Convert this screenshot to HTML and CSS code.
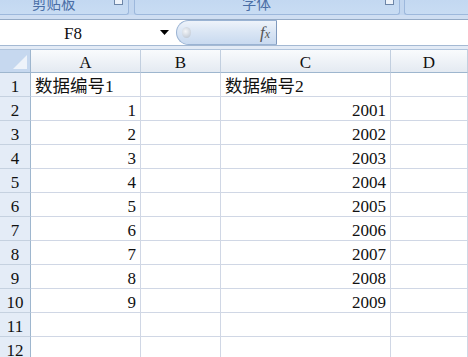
FILE: index.html
```html
<!DOCTYPE html>
<html lang="zh-CN">
<head>
<meta charset="utf-8">
<title>Excel</title>
<link rel="stylesheet" href="styles.css">
</head>
<body>
<div class="app">
  <div class="ribbon">
    <div class="group g1"><span class="glabel l1">剪贴板</span><span class="launcher"></span></div>
    <div class="group g2"><span class="glabel l2">字体</span><span class="launcher"></span></div>
    <div class="group g3"></div>
  </div>
  <div class="sep"></div>
  <div class="fbar">
    <div class="namebox">
      <span class="name">F8</span>
      <svg class="arrow" width="9" height="5" viewBox="0 0 9 5"><path d="M0 0H9L4.5 5Z" fill="#000"/></svg>
    </div>
    <div class="pill">
      <span class="knob"></span>
      <span class="fx">f<span class="fxx">x</span></span>
    </div>
    <div class="finput"></div>
  </div>
  <div class="strip"></div>
  <div class="grid">
    <div class="corner"><span class="tri"></span></div>
    <div class="colh">A</div>
    <div class="colh">B</div>
    <div class="colh">C</div>
    <div class="colh">D</div>

    <div class="rowh">1</div><div class="cell txt">数据编号1</div><div class="cell"></div><div class="cell txt">数据编号2</div><div class="cell"></div>
    <div class="rowh">2</div><div class="cell num">1</div><div class="cell"></div><div class="cell num">2001</div><div class="cell"></div>
    <div class="rowh">3</div><div class="cell num">2</div><div class="cell"></div><div class="cell num">2002</div><div class="cell"></div>
    <div class="rowh">4</div><div class="cell num">3</div><div class="cell"></div><div class="cell num">2003</div><div class="cell"></div>
    <div class="rowh">5</div><div class="cell num">4</div><div class="cell"></div><div class="cell num">2004</div><div class="cell"></div>
    <div class="rowh">6</div><div class="cell num">5</div><div class="cell"></div><div class="cell num">2005</div><div class="cell"></div>
    <div class="rowh">7</div><div class="cell num">6</div><div class="cell"></div><div class="cell num">2006</div><div class="cell"></div>
    <div class="rowh">8</div><div class="cell num">7</div><div class="cell"></div><div class="cell num">2007</div><div class="cell"></div>
    <div class="rowh">9</div><div class="cell num">8</div><div class="cell"></div><div class="cell num">2008</div><div class="cell"></div>
    <div class="rowh">10</div><div class="cell num">9</div><div class="cell"></div><div class="cell num">2009</div><div class="cell"></div>
    <div class="rowh">11</div><div class="cell"></div><div class="cell"></div><div class="cell"></div><div class="cell"></div>
    <div class="rowh">12</div><div class="cell"></div><div class="cell"></div><div class="cell"></div><div class="cell"></div>
  </div>
</div>
</body>
</html>
```
FILE: styles.css
```css
html, body {
  margin: 0;
  padding: 0;
  background: #ffffff;
}
.app {
  width: 468px;
  height: 357px;
  overflow: hidden;
  font-family: "Liberation Serif", "Noto Sans CJK SC", serif;
}
.ribbon {
  display: flex;
  height: 15px;
  background: #c2d6ef;
}
.group {
  position: relative;
  box-sizing: border-box;
  height: 15px;
  background: linear-gradient(#c3d8f1, #c8dcf3);
  border: 1px solid #9db8dc;
  border-top: none;
  border-radius: 0 0 3px 3px;
  overflow: hidden;
}
.g1 { width: 129px; border-left: none; border-radius: 0 0 3px 0; }
.g2 { width: 266px; margin-left: 5px; }
.g3 { flex: 1; margin-left: 4px; border-right: none; border-radius: 0 0 0 3px; }
.glabel {
  position: absolute;
  top: -6px;
  font-family: "Noto Sans CJK SC", sans-serif;
  font-size: 14.5px;
  line-height: 18px;
  color: #4a6ea6;
}
.l1 { left: 32px; }
.l2 { left: 107px; }
.launcher {
  position: absolute;
  right: 5px;
  top: 0;
  width: 7px;
  height: 4px;
  border: 1px solid #6d86a8;
  border-top: none;
  background: #eef3fa;
}
.sep {
  height: 4px;
  background: #cfdef2;
}
.fbar {
  display: flex;
  box-sizing: border-box;
  height: 27px;
  border-top: 1px solid #94aac6;
  border-bottom: 1px solid #a4b9d3;
  background: #ffffff;
}
.namebox {
  width: 176px;
  display: flex;
  align-items: center;
}
.name {
  width: 146px;
  text-align: center;
  font-size: 17px;
  color: #111;
  padding-top: 2px;
}
.arrow {
  margin-left: 14px;
}
.pill {
  box-sizing: border-box;
  width: 101px;
  display: flex;
  align-items: center;
  justify-content: space-between;
  border: 1px solid #9ab3d3;
  border-right: 1px solid #7f99bd;
  border-radius: 13px 0 0 13px;
  background: linear-gradient(#eef3fa, #d9e5f4 50%, #c9daf0);
}
.knob {
  width: 9px;
  height: 11px;
  margin-left: 5px;
  border-radius: 50%;
  background: radial-gradient(circle at 40% 40%, #f4f6f9, #b5bfcc);
}
.fx {
  margin-right: 6px;
  font-style: italic;
  font-size: 17px;
  color: #555;
  font-family: "Liberation Serif", serif;
}
.fxx {
  font-size: 12px;
}
.finput {
  flex: 1;
}
.strip {
  height: 3px;
  background: #e3ebf6;
}
.grid {
  display: grid;
  grid-template-columns: 31px 110px 80px 170px 77px;
  grid-auto-rows: 24px;
  font-size: 17px;
  color: #111;
}
.corner {
  position: relative;
  box-sizing: border-box;
  border-right: 1px solid #9eb6ce;
  border-bottom: 1px solid #9eb6ce;
  border-top: 1px solid #b0c4dc;
  background: #c6d8ef;
}
.tri {
  position: absolute;
  right: 3px;
  bottom: 3px;
  width: 0;
  height: 0;
  border-left: 14px solid transparent;
  border-bottom: 14px solid #eef3fa;
}
.colh {
  box-sizing: border-box;
  border-top: 1px solid #b0c4dc;
  border-right: 1px solid #c2cfdf;
  border-bottom: 1px solid #9eb6ce;
  background: linear-gradient(#f9fbfd, #e4eaf2);
  text-align: center;
  line-height: 20px;
  padding-top: 3px;
}
.rowh {
  box-sizing: border-box;
  border-right: 1px solid #9eb6ce;
  border-bottom: 1px solid #c5d1e0;
  background: #e4ecf7;
  text-align: center;
  line-height: 20px;
  padding-top: 4px;
}
.cell {
  box-sizing: border-box;
  border-right: 1px solid #d0d7e5;
  border-bottom: 1px solid #d0d7e5;
  line-height: 20px;
  padding: 4px 4px 0 4px;
  white-space: nowrap;
  overflow: hidden;
}
.num { text-align: right; }
.txt {
  font-size: 17.5px;
  padding-left: 4px;
  padding-top: 2px;
  line-height: 22px;
}
```
